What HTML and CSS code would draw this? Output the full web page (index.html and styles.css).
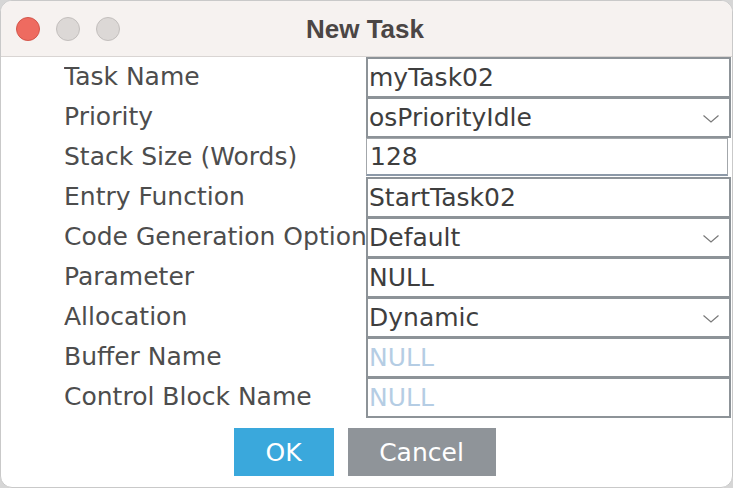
FILE: index.html
```html
<!DOCTYPE html>
<html>
<head>
<meta charset="utf-8">
<title>New Task</title>
<link rel="stylesheet" href="styles.css">
</head>
<body>
<div class="window">
  <div class="titlebar">
    <div class="lights">
      <span class="light red"></span>
      <span class="light gray"></span>
      <span class="light gray"></span>
    </div>
    <div class="title">New Task</div>
  </div>
  <div class="form">
    <div class="label">Task Name</div>
    <div class="field">myTask02</div>
    <div class="label">Priority</div>
    <div class="field select">osPriorityIdle<svg class="chev" width="16" height="8" viewBox="0 0 16 8"><path d="M0.5 0.5 L8 7 L15.5 0.5" fill="none" stroke="#7a7a7a" stroke-width="1.2"/></svg></div>
    <div class="label">Stack Size (Words)</div>
    <div class="field spin">128</div>
    <div class="label">Entry Function</div>
    <div class="field">StartTask02</div>
    <div class="label">Code Generation Option</div>
    <div class="field select">Default<svg class="chev" width="16" height="8" viewBox="0 0 16 8"><path d="M0.5 0.5 L8 7 L15.5 0.5" fill="none" stroke="#7a7a7a" stroke-width="1.2"/></svg></div>
    <div class="label">Parameter</div>
    <div class="field">NULL</div>
    <div class="label">Allocation</div>
    <div class="field select">Dynamic<svg class="chev" width="16" height="8" viewBox="0 0 16 8"><path d="M0.5 0.5 L8 7 L15.5 0.5" fill="none" stroke="#7a7a7a" stroke-width="1.2"/></svg></div>
    <div class="label">Buffer Name</div>
    <div class="field placeholder">NULL</div>
    <div class="label">Control Block Name</div>
    <div class="field placeholder">NULL</div>
  </div>
  <div class="buttons">
    <div class="btn ok">OK</div>
    <div class="btn cancel">Cancel</div>
  </div>
</div>
</body>
</html>
```
FILE: styles.css
```css
html, body {
  margin: 0;
  padding: 0;
  background: #d6d6d6;
}
.window {
  width: 733px;
  height: 488px;
  box-sizing: border-box;
  background: #ffffff;
  border-radius: 12px;
  border: 1px solid #c9c9c9;
  overflow: hidden;
  font-family: "DejaVu Sans", sans-serif;
}
.titlebar {
  height: 55px;
  background: #f6f2f0;
  border-bottom: 1px solid #d9d5d3;
  display: flex;
  align-items: center;
  position: relative;
}
.lights {
  display: flex;
  gap: 16px;
  padding-left: 15px;
  padding-top: 1px;
}
.light {
  width: 24px;
  height: 24px;
  box-sizing: border-box;
  border-radius: 50%;
}
.light.red {
  background: #ee6b60;
  border: 1px solid #d4564b;
}
.light.gray {
  background: #dcd8d6;
  border: 1px solid #c3bfbd;
}
.title {
  position: absolute;
  left: 0;
  right: 0;
  top: 13px;
  text-align: center;
  font-family: "Liberation Sans", Arial, sans-serif;
  font-weight: bold;
  font-size: 26px;
  color: #4b4645;
  padding-right: 3px;
}
.form {
  display: grid;
  grid-template-columns: 302px 365px;
  grid-auto-rows: 40px;
  padding-left: 63px;
  font-size: 25px;
}
.label {
  color: #4d4d4d;
  white-space: nowrap;
  overflow: hidden;
  display: flex;
  align-items: center;
  line-height: 40px;
}
.field {
  box-sizing: border-box;
  height: 41px;
  margin-bottom: -1px;
  border: 2px solid #8d9398;
  background: #ffffff;
  color: #3e3e3e;
  padding-left: 1px;
  display: flex;
  align-items: center;
  position: relative;
  white-space: nowrap;
}
.field.select .chev {
  position: absolute;
  right: 10px;
  top: 16px;
}
.field.spin {
  border: 1px solid #a3a7ab;
  border-bottom: 2px solid #8c99a8;
  margin-right: 3px;
  margin-top: 1px;
  height: 38px;
  padding-left: 3px;
}
.field.placeholder {
  color: #b5cde4;
}
.buttons {
  display: flex;
  justify-content: center;
  gap: 14px;
  margin-top: 11px;
  padding-right: 4px;
}
.btn {
  height: 48px;
  display: flex;
  align-items: center;
  justify-content: center;
  color: #ffffff;
  font-size: 25px;
}
.btn.ok {
  width: 100px;
  background: #3aa8dc;
}
.btn.cancel {
  width: 148px;
  background: #8f9499;
}
```
